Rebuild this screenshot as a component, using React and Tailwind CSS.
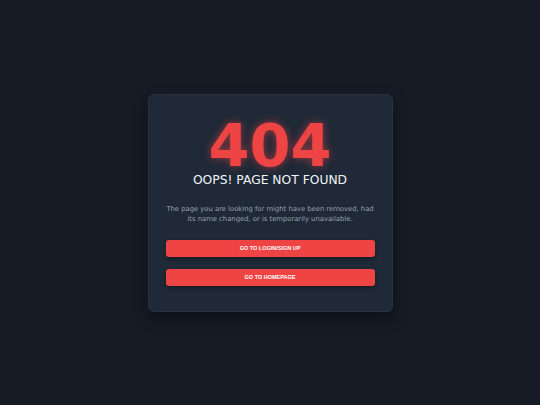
// Not-found page: centered card with a glowing 404, message and two actions
export default function App() {
  return (
    <div
      className="min-h-screen w-full bg-[#161b26] flex items-center justify-center"
      style={{ fontFamily: '"DejaVu Sans", sans-serif' }}
    >
      <div className="w-[245px] h-[218px] bg-[#1f2937] rounded-md border border-[#273243] shadow-[0_6px_16px_rgba(0,0,0,0.45)] px-[16px] pt-[25px] flex flex-col items-center">
        <h1 className="text-[59px] leading-[52px] font-bold text-[#ef4444] [text-shadow:0_0_8px_rgba(239,68,68,0.6)]">
          404
        </h1>
        <h2 className="mt-[0px] text-[12.3px] leading-[16px] text-gray-100">
          OOPS! PAGE NOT FOUND
        </h2>
        <p className="mt-[16px] w-[211px] shrink-0 text-[6.8px] leading-[10px] text-gray-400 text-center">
          The page you are looking for might have been removed, had its name changed, or is temporarily unavailable.
        </p>
        <div className="mt-[16px] w-full px-[1px] flex flex-col gap-[12px]">
          <button className="w-full h-[17px] rounded-[3px] bg-[#ef4444] text-white text-[5.5px] font-bold uppercase shadow-[0_2px_4px_rgba(0,0,0,0.35)] font-['Liberation_Sans',sans-serif]">
            Go to Login/Sign up
          </button>
          <button className="w-full h-[17px] rounded-[3px] bg-[#ef4444] text-white text-[5.5px] font-bold uppercase shadow-[0_2px_4px_rgba(0,0,0,0.35)] font-['Liberation_Sans',sans-serif]">
            Go to Homepage
          </button>
        </div>
      </div>
    </div>
  );
}
